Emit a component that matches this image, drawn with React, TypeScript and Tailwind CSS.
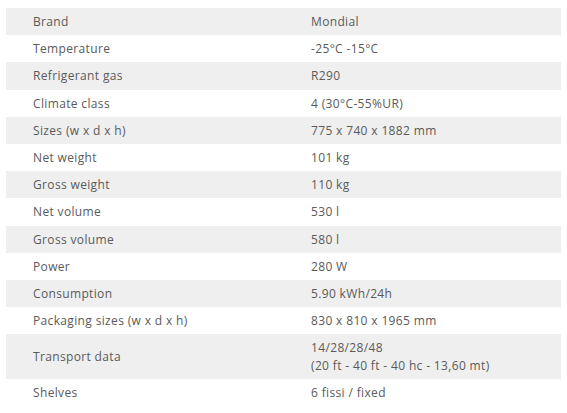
import React from "react";

const rows: [string, string[]][] = [
  ["Brand", ["Mondial"]],
  ["Temperature", ["-25°C -15°C"]],
  ["Refrigerant gas", ["R290"]],
  ["Climate class", ["4 (30°C-55%UR)"]],
  ["Sizes (w x d x h)", ["775 x 740 x 1882 mm"]],
  ["Net weight", ["101 kg"]],
  ["Gross weight", ["110 kg"]],
  ["Net volume", ["530 l"]],
  ["Gross volume", ["580 l"]],
  ["Power", ["280 W"]],
  ["Consumption", ["5.90 kWh/24h"]],
  ["Packaging sizes (w x d x h)", ["830 x 810 x 1965 mm"]],
  ["Transport data", ["14/28/28/48", "(20 ft - 40 ft - 40 hc - 13,60 mt)"]],
  ["Shelves", ["6 fissi / fixed"]],
];

export default function App() {
  return (
    <div className="w-[567px] h-[413px] bg-white pt-[8px] px-[6px]" style={{ fontFamily: '"Open Sans", "Liberation Sans", sans-serif' }}>
      <div className="flex flex-col text-[12px] leading-[17.2px] tracking-[0.35px] text-[#5a5a5a]">
        {rows.map(([label, vals], i) => (
          <div key={label} className={`flex items-center py-[5px] ${i % 2 === 0 ? "bg-[#efefef]" : "bg-white"}`}>
            <div className="w-[278px] pl-[27px]">{label}</div>
            <div className="pl-[27px]">
              {vals.map((v) => (
                <div key={v}>{v}</div>
              ))}
            </div>
          </div>
        ))}
      </div>
    </div>
  );
}
